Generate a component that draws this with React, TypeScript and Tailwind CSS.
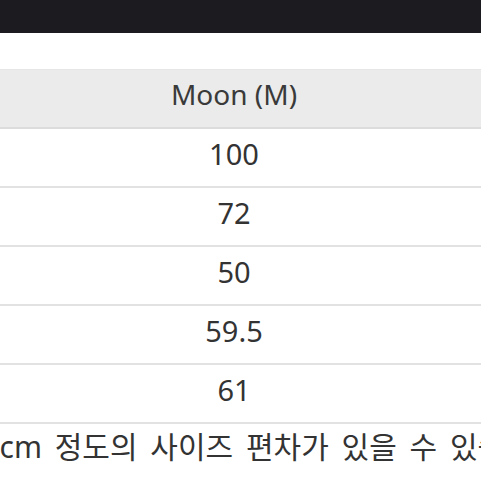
import React from "react";

const rows = ["100", "72", "50", "59.5", "61"];

export default function App() {
  return (
    <div
      className="w-[481px] h-[481px] overflow-hidden bg-white text-[#333333]"
      style={{ fontFamily: '"Noto Sans", "Noto Sans CJK KR", sans-serif' }}
    >
      <div className="h-[33px] bg-[#1c1b1f]" />
      <div className="h-[36px] bg-white" />
      <div className="border-t border-[#e6e6e6]">
        <div className="h-[57px] bg-[#ebebeb] border-b-2 border-[#dcdcdc] box-content flex">
          <div className="w-[468px] flex items-center justify-center pb-[9px] text-[28px] leading-none text-[#3a3a3a]">
            Moon (M)
          </div>
        </div>
        {rows.map((r) => (
          <div
            key={r}
            className="h-[57px] border-b-2 border-[#e2e2e2] box-content flex"
          >
            <div className="w-[468px] flex items-center justify-center pb-[8px] text-[29px] leading-none">
              {r}
            </div>
          </div>
        ))}
      </div>
      <div className="h-[46px] flex items-center whitespace-nowrap">
        <span className="ml-[-52px] text-[30px] leading-none [word-spacing:5px] pb-[0px]">
          1~3cm 정도의 사이즈 편차가 있을 수 있습니다.
        </span>
      </div>
    </div>
  );
}
